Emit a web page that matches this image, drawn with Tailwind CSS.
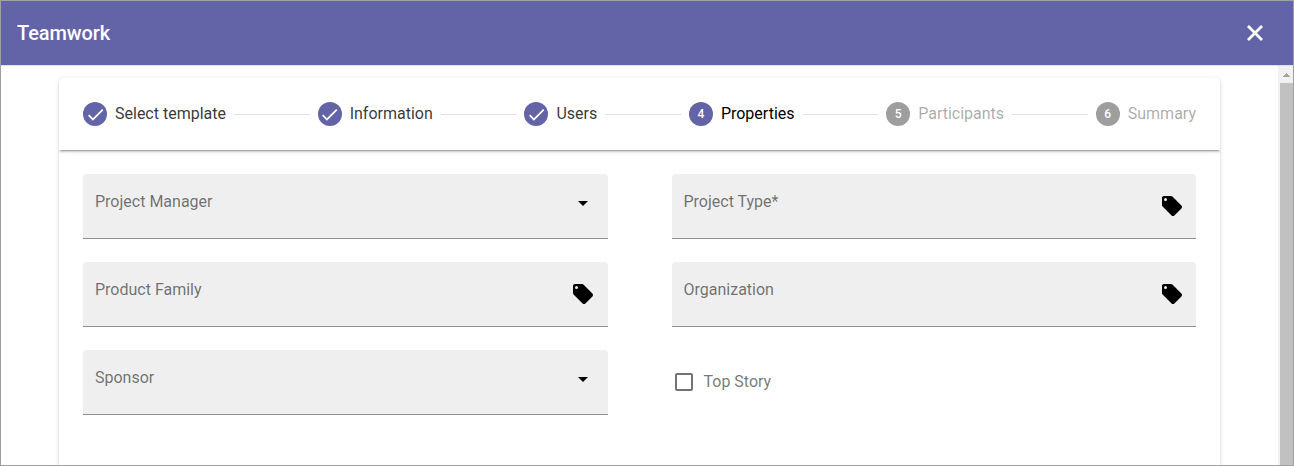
<!DOCTYPE html>
<html lang="en">
<head>
<meta charset="utf-8">
<title>Teamwork</title>
<script src="https://cdn.jsdelivr.net/npm/@tailwindcss/browser@4"></script>
</head>
<body class="bg-white">
<svg class="hidden">
  <symbol id="check" viewBox="0 0 24 24"><path fill="currentColor" d="M21,7L9,19L3.5,13.5L4.91,12.09L9,16.17L19.59,5.59L21,7Z"/></symbol>
  <symbol id="tag" viewBox="0 0 24 24"><path fill="currentColor" d="M5.5,7A1.5,1.5 0 0,1 4,5.5A1.5,1.5 0 0,1 5.5,4A1.5,1.5 0 0,1 7,5.5A1.5,1.5 0 0,1 5.5,7M21.41,11.58L12.41,2.58C12.05,2.22 11.55,2 11,2H4C2.89,2 2,2.89 2,4V11C2,11.55 2.22,12.05 2.59,12.41L11.58,21.41C11.95,21.77 12.45,22 13,22C13.55,22 14.05,21.77 14.41,21.41L21.41,14.41C21.78,14.05 22,13.55 22,13C22,12.44 21.77,11.94 21.41,11.58Z"/></symbol>
  <symbol id="down" viewBox="0 0 24 24"><path fill="currentColor" d="M7,10L12,15L17,10H7Z"/></symbol>
</svg>
<div class="flex h-[466px] w-[1294px] flex-col overflow-hidden border border-[#a0a0a0] font-['Roboto',sans-serif] text-base font-normal">
  <header class="flex h-16 shrink-0 items-center justify-between bg-[#6264a7] pl-4 pr-[26px] text-white">
    <h1 class="text-xl font-medium leading-6 tracking-[-0.1px]">Teamwork</h1>
    <svg class="size-6" viewBox="0 0 24 24"><path fill="none" stroke="currentColor" stroke-width="2.8" d="M5 5L19 19M19 5L5 19"/></svg>
  </header>
  <div class="flex min-h-0 flex-1 border-t border-[#dedfed]">
    <main class="min-w-0 flex-1 pl-[58px] pr-[58px] pt-3">
      <section class="h-[600px] rounded bg-white shadow-[0_3px_1px_-2px_rgba(0,0,0,0.2),0_2px_2px_0_rgba(0,0,0,0.14),0_1px_5px_0_rgba(0,0,0,0.12)]">
        <nav class="flex h-[72px] items-center gap-2 rounded-t px-6 leading-6 text-black/80 shadow-[0_3px_1px_-2px_rgba(0,0,0,0.2),0_2px_2px_0_rgba(0,0,0,0.14),0_1px_5px_0_rgba(0,0,0,0.12)] [clip-path:inset(0_0_-8px_0)]">
          <span class="flex size-6 shrink-0 items-center justify-center rounded-full bg-[#6264a7] text-white"><svg class="size-[21px]"><use href="#check"/></svg></span><span>Select template</span>
          <i class="h-px flex-1 bg-black/12"></i>
          <span class="flex size-6 shrink-0 items-center justify-center rounded-full bg-[#6264a7] text-white"><svg class="size-[21px]"><use href="#check"/></svg></span><span>Information</span>
          <i class="h-px flex-1 bg-black/12"></i>
          <span class="flex size-6 shrink-0 items-center justify-center rounded-full bg-[#6264a7] text-white"><svg class="size-[21px]"><use href="#check"/></svg></span><span>Users</span>
          <i class="h-px flex-1 bg-black/12"></i>
          <span class="flex size-6 shrink-0 items-center justify-center rounded-full bg-[#6264a7] text-xs font-medium text-white">4</span><span class="text-black">Properties</span>
          <i class="h-px flex-1 bg-black/12"></i>
          <span class="flex size-6 shrink-0 items-center justify-center rounded-full bg-[#9e9e9e] text-xs font-medium text-white">5</span><span class="text-black/35">Participants</span>
          <i class="h-px flex-1 bg-black/12"></i>
          <span class="flex size-6 shrink-0 items-center justify-center rounded-full bg-[#9e9e9e] text-xs font-medium text-white">6</span><span class="text-black/35">Summary</span>
        </nav>
        <form class="grid grid-cols-2 gap-x-16 gap-y-[23px] px-6 pt-6 text-black/55">
          <div class="flex h-[65px] justify-between rounded-t border-b border-[#8f8f8f] bg-[#efefef] pl-3 pr-[12.5px]"><span class="pt-4 leading-6">Project Manager</span><svg class="mt-[17px] size-6 text-black"><use href="#down"/></svg></div>
          <div class="flex h-[65px] justify-between rounded-t border-b border-[#8f8f8f] bg-[#efefef] pl-3 pr-3"><span class="pt-4 leading-6">Project Type*</span><svg class="mt-5 size-6 text-black"><use href="#tag"/></svg></div>
          <div class="flex h-[65px] justify-between rounded-t border-b border-[#8f8f8f] bg-[#efefef] pl-3 pr-[12.5px]"><span class="pt-4 leading-6">Product Family</span><svg class="mt-5 size-6 text-black"><use href="#tag"/></svg></div>
          <div class="flex h-[65px] justify-between rounded-t border-b border-[#8f8f8f] bg-[#efefef] pl-3 pr-3"><span class="pt-4 leading-6">Organization</span><svg class="mt-5 size-6 text-black"><use href="#tag"/></svg></div>
          <div class="flex h-[65px] justify-between rounded-t border-b border-[#8f8f8f] bg-[#efefef] pl-3 pr-[12.5px]"><span class="pt-4 leading-6">Sponsor</span><svg class="mt-[17px] size-6 text-black"><use href="#down"/></svg></div>
          <label class="flex h-[65px] items-start gap-2 pt-5"><svg class="size-6" viewBox="0 0 24 24"><path fill="currentColor" d="M19,3H5C3.89,3 3,3.89 3,5V19A2,2 0 0,0 5,21H19A2,2 0 0,0 21,19V5C21,3.89 20.1,3 19,3M19,5V19H5V5H19Z"/></svg><span class="leading-6">Top Story</span></label>
        </form>
      </section>
    </main>
    <div class="flex w-[15px] shrink-0 flex-col bg-[#f1f1f1] pl-0.5">
      <div class="flex h-[17px] shrink-0 items-center justify-center"><svg class="h-1 w-[7px]" viewBox="0 0 7 4"><path fill="#a3a3a3" d="M3 0h1v1h1v1h1v1h1v1H0V3h1V2h1V1h1z"/></svg></div>
      <div class="flex-1 bg-[#c1c1c1]"></div>
    </div>
  </div>
</div>
</body>
</html>
